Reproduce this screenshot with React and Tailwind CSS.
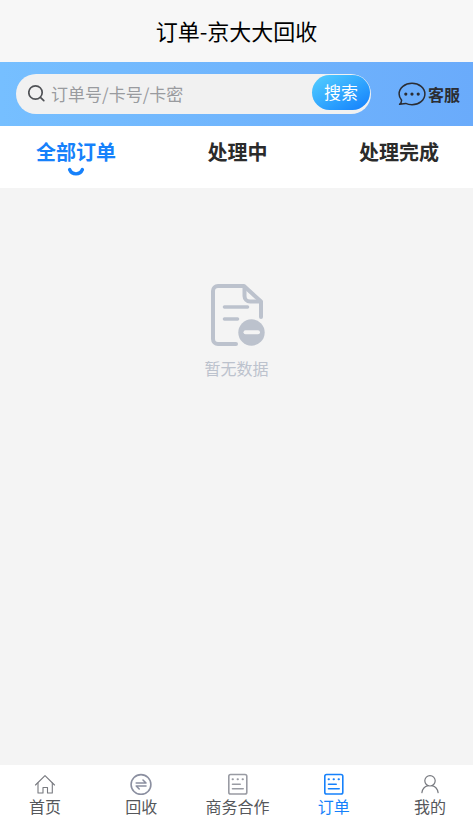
import React, { useState } from 'react';

const SearchIcon = () => (
    <svg width="18" height="18" viewBox="0 0 18 18" fill="none" stroke="#505256" strokeWidth="1.7" strokeLinecap="round" aria-hidden="true">
        <circle cx="7.5" cy="8.5" r="6.7" />
        <path d="M12.4 13.4 15.8 16.7" />
    </svg>
);

const ChatIcon = () => (
    <svg width="28" height="25" viewBox="0 0 28 25" fill="none" stroke="#2b2d33" strokeWidth="1.5" strokeLinejoin="round" aria-hidden="true">
        <path d="M3.6 18.2C2 16.3 1.1 14.2 1.1 12 1.1 6 6.9 1.2 14 1.2S26.9 6 26.9 12 21.100 22.800 14 22.800c-2.300 0-4.500-.5-6.300-1.400L1.600 22.300C2.800 21.300 3.600 20 3.600 18.200Z" />
        <g fill="#2b2d33" stroke="none">
            <circle cx="7.8" cy="12.1" r="1.6" />
            <circle cx="14" cy="12.1" r="1.6" />
            <circle cx="20.2" cy="12.1" r="1.6" />
        </g>
    </svg>
);

const EmptyIcon = () => (
    <svg width="56" height="64" viewBox="0 0 56 64" fill="none" stroke="#bcc2cd" strokeWidth="4" strokeLinecap="round" strokeLinejoin="round" aria-hidden="true">
        <path d="M27 62H9a5 5 0 0 1-5-5V9a5 5 0 0 1 5-5h26L52 19.500V35" />
        <path d="M35.500 5v9a5.500 5.500 0 0 0 5.500 5.500H51" />
        <path d="M15.500 25H38.500M15.500 37H28.500" strokeWidth="3.600" />
        <circle cx="42.500" cy="50.500" r="13.200" fill="#bcc2cd" stroke="none" />
        <path d="M36.500 50.300H49" stroke="#f4f4f4" />
    </svg>
);

const HomeIcon = () => (
    <svg width="22" height="22" viewBox="0 0 22 22" fill="none" stroke="#77797f" strokeWidth="1.1" strokeLinejoin="round" strokeLinecap="round" aria-hidden="true">
        <path d="M1.500 12 11 2.700l9.500 9.300" />
        <path d="M4 10V20H9V14.500h4.500v5.500H18.300V10" />
    </svg>
);

const RecycleIcon = () => (
    <svg width="22" height="22" viewBox="0 0 22 22" fill="none" stroke="#8b8fa0" strokeWidth="1.600" strokeLinejoin="round" strokeLinecap="round" aria-hidden="true">
        <circle cx="11" cy="11.500" r="9.900" />
        <path d="M6.200 10H16L13 7M6.200 13H16M6.200 13 9.200 16" />
    </svg>
);

const ListIcon = () => (
    <svg width="22" height="22" viewBox="0 0 22 22" fill="none" stroke="currentColor" strokeWidth="1.6" strokeLinecap="round" aria-hidden="true">
        <rect x="1.800" y="1.500" width="18" height="19.500" rx="1.800" />
        <path d="M5.500 11.200H13.200M5.500 15.800H16.200" />
        <path d="M5.600 6.300h.3M10.600 6.300h.3M15.600 6.300h.3" strokeWidth="2" />
    </svg>
);

const UserIcon = () => (
    <svg width="22" height="22" viewBox="0 0 22 22" fill="none" stroke="#77797f" strokeWidth="1.2" strokeLinecap="round" aria-hidden="true">
        <circle cx="11" cy="7.800" r="5.200" />
        <path d="M2.900 19.600C3.500 15.900 5.800 13.500 9 12.700M13 12.700c3.200.8 5.500 3.200 6.100 6.900" />
    </svg>
);

const tabs = ['全部订单', '处理中', '处理完成'];

const navItems = [
    { label: '首页', Icon: HomeIcon },
    { label: '回收', Icon: RecycleIcon },
    { label: '商务合作', Icon: ListIcon },
    { label: '订单', Icon: ListIcon },
    { label: '我的', Icon: UserIcon },
];

const App = () => {
    const [activeTab, setActiveTab] = useState('全部订单');
    const [keyword, setKeyword] = useState('');

    return (
        <div className="min-h-screen flex flex-col bg-[#f4f4f4] font-['Noto_Sans_CJK_SC',sans-serif]">
            <header className="h-[62px] flex items-center justify-center pb-0.5 bg-[#f7f7f7]">
                <h1 className="text-[22px] leading-8 text-black">订单-京大大回收</h1>
            </header>

            {/* Search bar */}
            <div className="h-16 flex items-center pl-4 pr-[13px] bg-linear-to-r from-[#76bfff] to-[#6aabfb]">
                <form
                    onSubmit={(e) => e.preventDefault()}
                    className="flex-1 min-w-0 h-10 flex items-start pl-3 pr-px pt-px rounded-full bg-[#f1f1f1]"
                >
                    <label htmlFor="keyword" className="h-9 flex items-center" aria-label="订单号/卡号/卡密">
                        <SearchIcon />
                    </label>
                    <input
                        id="keyword"
                        type="text"
                        value={keyword}
                        onChange={(e) => setKeyword(e.target.value)}
                        placeholder="订单号/卡号/卡密"
                        className="flex-1 min-w-0 h-9 pl-[5px] text-[17px] bg-transparent outline-none text-[#333] placeholder:text-[#999b9f]"
                    />
                    <button
                        type="submit"
                        className="w-[58px] h-[35px] pb-0.5 rounded-full text-[17px] leading-6 text-white bg-linear-to-br from-[#55d0ff] to-[#147dfb]"
                    >
                        搜索
                    </button>
                </form>
                <a href="#service" className="flex items-center gap-0.5 ml-[27px] text-base font-bold text-[#2b2d33]">
                    <ChatIcon />
                    客服
                </a>
            </div>

            {/* Order status tabs */}
            <div className="h-[62px] flex justify-between pl-9 pr-[34px] pt-3 bg-white">
                {tabs.map((tab) => (
                    <button
                        key={tab}
                        onClick={() => setActiveTab(tab)}
                        className={`flex flex-col items-center text-xl leading-7 font-bold ${activeTab === tab ? 'text-[#1681fb]' : 'text-[#2b2b2b]'}`}
                    >
                        {tab}
                        {activeTab === tab && (
                            <svg width="18" height="10" viewBox="0 0 18 10" fill="none" stroke="currentColor" strokeWidth="3.4" strokeLinecap="round" aria-hidden="true">
                                <path d="M2.600 3.500C5 9.300 13 9.300 15.400 3.500" />
                            </svg>
                        )}
                    </button>
                ))}
            </div>

            <main className="flex-1 flex flex-col items-center pt-[94px]">
                <EmptyIcon />
                <p className="mt-2.5 text-base leading-6 text-[#bcc2cd]">暂无数据</p>
            </main>

            <nav className="h-14 flex justify-between pl-[13px] pr-[11px] pt-2 bg-white">
                {navItems.map(({ label, Icon }) => (
                    <a
                        key={label}
                        href="#"
                        className={`w-16 flex flex-col items-center ${label === '订单' ? 'text-[#1681fb]' : 'text-[#999ba3]'}`}
                    >
                        <Icon />
                        <span className={`text-base leading-[22px] whitespace-nowrap ${label === '订单' ? '' : 'text-[#55575b]'}`}>{label}</span>
                    </a>
                ))}
            </nav>
        </div>
    );
};

export default App;
